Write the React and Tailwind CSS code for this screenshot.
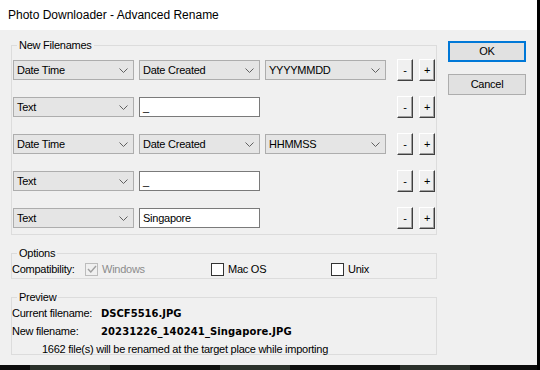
import React from 'react';

const Chevron = () => (
  <svg width="9" height="5" viewBox="0 0 9 5" className="shrink-0">
    <polyline points="0.5,0.5 4.5,4.5 8.5,0.5" fill="none" stroke="#606060" strokeWidth="1" />
  </svg>
);

// Windows-style combo box
const Combo = ({ value }) => (
  <div className="flex h-[20px] w-[121px] items-center justify-between border border-[#adadad] bg-[#e5e5e5] pl-[3px] pr-[5px]">
    <span>{value}</span>
    <Chevron />
  </div>
);

const TextBox = ({ value }) => (
  <div className="flex h-[20px] w-[121px] items-center border border-[#7a7a7a] bg-white pl-[3px]">
    <span>{value}</span>
  </div>
);

const TinyButton = ({ label }) => (
  <div className="flex h-[22px] w-[16px] items-center justify-center border-t border-l border-t-white border-l-white border-r border-b border-r-[#404040] border-b-[#404040] bg-[#f0f0f0] shadow-[inset_-1px_-1px_0_#a0a0a0]">
    {label}
  </div>
);

const Row = ({ kind, second, third }) => (
  <div className="flex h-[20px] items-center">
    <Combo value={kind} />
    <div className="ml-[5px]">
      {kind === 'Text' ? <TextBox value={second} /> : <Combo value={second} />}
    </div>
    <div className="ml-[5px] w-[121px]">{third && <Combo value={third} />}</div>
    <div className="ml-[11px] flex gap-[6px]">
      <TinyButton label="-" />
      <TinyButton label="+" />
    </div>
  </div>
);

const CheckBox = ({ checked, disabled }) => (
  <div
    className={`flex h-[13px] w-[13px] items-center justify-center border ${
      disabled ? 'border-[#bcbcbc] bg-[#f0f0f0]' : 'border-[#333333] bg-white'
    }`}
  >
    {checked && (
      <svg width="10" height="8" viewBox="0 0 10 8">
        <polyline points="1,4 3.8,7 9,1" fill="none" stroke={disabled ? '#a0a0a0' : '#333'} strokeWidth="1.4" />
      </svg>
    )}
  </div>
);

const Group = ({ title, className = '', children }) => (
  <fieldset className={`border border-[#dcdcdc] ${className}`}>
    <legend className="ml-[5px] px-[2px] leading-[14px]">{title}</legend>
    {children}
  </fieldset>
);

export default function App() {
  const rows = [
    { kind: 'Date Time', second: 'Date Created', third: 'YYYYMMDD' },
    { kind: 'Text', second: '_' },
    { kind: 'Date Time', second: 'Date Created', third: 'HHMMSS' },
    { kind: 'Text', second: '_' },
    { kind: 'Text', second: 'Singapore' },
  ];

  return (
    <div className="flex h-[370px] w-[540px] overflow-hidden bg-black font-['Liberation_Sans',Arial,sans-serif] text-[11px] tracking-[-0.25px] text-black">
      <div className="flex w-[537px] flex-col">
        <div className="flex h-[30px] items-center bg-white pl-[8px] text-[12px] tracking-normal">
          Photo Downloader - Advanced Rename
        </div>

        <div className="flex h-[335px] bg-[#f0f0f0]">
          <div className="ml-[11px] w-[426px]">
            <Group title="New Filenames" className="mt-[8px] h-[197px]">
              <div className="mt-[8px] flex flex-col gap-[17px] pl-[1px]">
                {rows.map((r, i) => (
                  <Row key={i} {...r} />
                ))}
              </div>
            </Group>

            <Group title="Options" className="mt-[11px] h-[33px]">
              <div className="flex h-[18px] items-center">
                <span className="w-[73px]">Compatibility:</span>
                <CheckBox checked disabled />
                <span className="ml-[4px] w-[109px] text-[#8c8c8c]">Windows</span>
                <CheckBox />
                <span className="ml-[4px] w-[103px]">Mac OS</span>
                <CheckBox />
                <span className="ml-[4px]">Unix</span>
              </div>
            </Group>

            <Group title="Preview" className="mt-[11px] h-[65px]">
              <div className="flex flex-col">
                <div className="flex h-[18px] items-center">
                  <span className="w-[89px]">Current filename:</span>
                  <span className="font-['DejaVu_Sans',sans-serif] text-[10px] font-bold tracking-normal">DSCF5516.JPG</span>
                </div>
                <div className="flex h-[18px] items-center">
                  <span className="w-[89px]">New filename:</span>
                  <span className="font-['DejaVu_Sans',sans-serif] text-[10px] font-bold tracking-[0.1px]">20231226_140241_Singapore.JPG</span>
                </div>
                <div className="flex h-[18px] items-center pl-[30px]">
                  1662 file(s) will be renamed at the target place while importing
                </div>
              </div>
            </Group>
          </div>

          <div className="ml-[11px] flex flex-col gap-[12px] pt-[11px]">
            <div className="flex h-[21px] w-[78px] items-center justify-center border-2 border-[#0078d7] bg-[#e1e1e1]">
              OK
            </div>
            <div className="flex h-[21px] w-[78px] items-center justify-center border border-[#adadad] bg-[#e1e1e1]">
              Cancel
            </div>
          </div>
        </div>

        <div className="flex h-[5px]">
          <div className="w-[30px] bg-[#0c0c0c]" />
          <div className="w-[80px] bg-[#2a302a]" />
          <div className="w-[110px] bg-[#101210]" />
          <div className="w-[70px] bg-[#2c322c]" />
          <div className="w-[110px] bg-[#0e0f0e]" />
          <div className="w-[70px] bg-[#2a2f2a]" />
          <div className="flex-1 bg-[#0c0c0c]" />
        </div>
      </div>
      <div className="w-[3px] bg-black" />
    </div>
  );
}
